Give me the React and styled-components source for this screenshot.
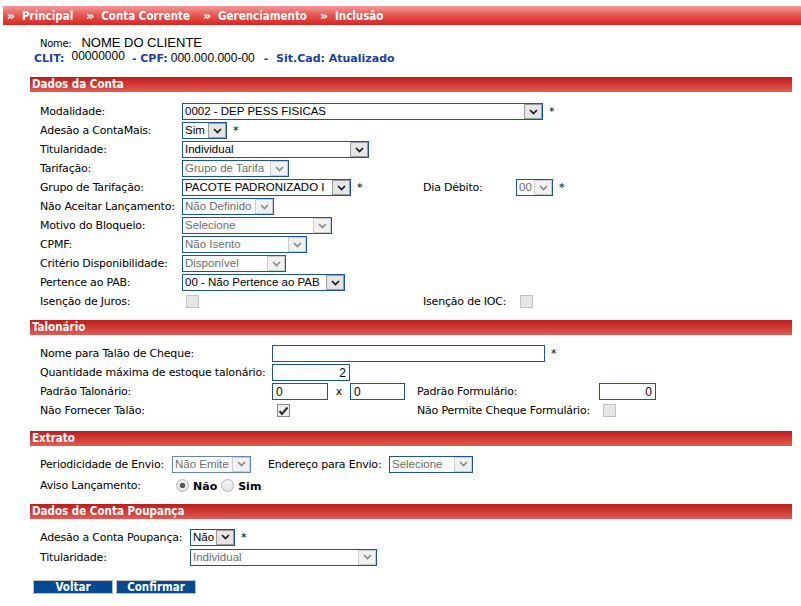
import React from 'react';
import styled, { createGlobalStyle } from 'styled-components';

const LABEL_FONT = `"DejaVu Sans", Verdana, sans-serif`;
const COND_FONT = `"DejaVu Sans Condensed", "DejaVu Sans", Verdana, sans-serif`;
const CTRL_FONT = `"Liberation Sans", Arial, sans-serif`;

const GlobalStyle = createGlobalStyle`
  html, body { margin: 0; padding: 0; background: #fff; }
  body { font-family: ${LABEL_FONT}; font-size: 11px; color: #000; }
`;

const Page = styled.div`
  width: 801px;
  padding-top: 6px;
`;

const NavBar = styled.nav`
  margin-left: 3px;
  height: 19px;
  display: flex;
  align-items: center;
  gap: 11px;
  padding-left: 2px;
  background: linear-gradient(to bottom, #f29d9a 0%, #e75a55 45%, #d9241e 100%);
`;

const NavItem = styled.span`
  display: flex;
  align-items: center;
  color: #fff;
  font-family: ${COND_FONT};
  font-stretch: condensed;
  font-weight: bold;
  font-size: 11.5px;
  white-space: nowrap;
`;

const NavArrow = styled.span`
  display: inline-block;
  width: 12px;
  margin-right: 5px;
  font-family: ${LABEL_FONT};
  font-stretch: normal;
  font-size: 13px;
  line-height: 13px;
  text-align: center;
`;

const ClientInfo = styled.div`
  padding: 10px 0 10px 0;
`;

const NameLine = styled.div`
  display: flex;
  align-items: baseline;
  height: 16px;
  padding-left: 40px;
`;

const NameLabel = styled.span`
  font-size: 10px;
  letter-spacing: -0.3px;
  margin-right: 10px;
`;

const NameValue = styled.span`
  font-family: ${CTRL_FONT};
  font-size: 13px;
`;

const InfoLine = styled.div`
  display: flex;
  align-items: baseline;
  height: 16px;
  padding-left: 34px;
`;

const InfoKey = styled.span`
  color: #20409a;
  font-weight: bold;
  font-size: 11px;
  margin-left: ${p => p.$ml || 0}px;
  white-space: pre;
`;

const InfoValue = styled.span`
  font-family: ${CTRL_FONT};
  font-size: 12px;
  margin-left: ${p => p.$ml || 0}px;
  position: relative;
  top: ${p => (p.$raised ? -2 : 0)}px;
`;

const Section = styled.section`
  margin-left: 30px;
  width: 762px;
`;

const SectionTitle = styled.h2`
  margin: 0;
  height: 15px;
  line-height: 15px;
  padding-left: 2px;
  color: #fff;
  font-family: ${COND_FONT};
  font-stretch: condensed;
  font-weight: bold;
  font-size: 11.5px;
  background: linear-gradient(to bottom, #b91f1d 0%, #d03a35 50%, #e35b53 100%);
`;

const SectionBody = styled.div`
  display: flex;
  flex-direction: column;
  padding: ${p => p.$pt}px 0 ${p => p.$pb}px 10px;
`;

const Row = styled.div`
  display: flex;
  align-items: center;
  height: ${p => p.$h || 19}px;
`;

const Cell = styled.div`
  display: flex;
  align-items: center;
  flex: none;
  width: ${p => p.$w}px;
`;

const Label = styled.span`
  flex: none;
  width: ${p => p.$w}px;
  margin-left: ${p => p.$ml || 0}px;
  letter-spacing: -0.2px;
  white-space: nowrap;
`;

const SelectBox = styled.div`
  flex: none;
  box-sizing: border-box;
  display: flex;
  align-items: stretch;
  width: ${p => p.$w}px;
  height: 17px;
  border: 1px solid ${p => p.$border || '#1c5597'};
  background: #fff;
`;

const SelectText = styled.span`
  flex: 1;
  min-width: 0;
  overflow: hidden;
  white-space: nowrap;
  padding-left: 2px;
  font-family: ${CTRL_FONT};
  font-size: 11.5px;
  line-height: 15px;
  color: ${p => (p.$disabled ? '#6d6d6d' : '#000')};
`;

const ArrowBtn = styled.span`
  flex: none;
  box-sizing: border-box;
  width: 18px;
  display: flex;
  align-items: center;
  justify-content: center;
  border: 1px solid ${p => (p.$disabled ? '#cdcdcd' : '#9c9c9c')};
  background: ${p => (p.$disabled ? '#f1f1f1' : '#e5e5e5')};
`;

const Req = styled.span`
  margin-left: 6px;
  font-size: 11px;
`;

const TextInput = styled.input`
  flex: none;
  box-sizing: border-box;
  width: ${p => p.$w}px;
  height: 17px;
  margin: 0;
  padding: 0 3px;
  border: 1px solid #1c5597;
  border-radius: 0;
  outline: none;
  background: #fff;
  font-family: ${CTRL_FONT};
  font-size: 12px;
  color: #000;
  text-align: ${p => p.$align || 'left'};
`;

const Times = styled.span`
  flex: none;
  width: 22px;
  text-align: center;
  font-size: 11px;
`;

const CheckBox = styled.span`
  flex: none;
  box-sizing: border-box;
  width: 13px;
  height: 13px;
  margin-left: ${p => p.$ml || 4}px;
  display: flex;
  align-items: center;
  justify-content: center;
  border: 1px solid ${p => (p.$checked ? '#8a8a8a' : '#c2c2c2')};
  background: ${p => (p.$checked ? '#ececec' : '#e6e6e6')};
`;

const RadioGroup = styled.div`
  display: flex;
  align-items: center;
  margin-left: 4px;
  gap: 4px;
`;

const RadioDot = styled.span`
  flex: none;
  box-sizing: border-box;
  width: 13px;
  height: 13px;
  border-radius: 50%;
  border: 1px solid #b4b4b4;
  background: ${p =>
    p.$checked
      ? 'radial-gradient(circle, #555 0 2.5px, #e9e9e9 3px)'
      : 'linear-gradient(#f4f4f4, #e2e2e2)'};
`;

const RadioText = styled.span`
  font-weight: bold;
  font-size: 11px;
  position: relative;
  top: 1px;
`;

const ButtonBar = styled.div`
  display: flex;
  gap: 3px;
  margin: 13px 0 0 33px;
`;

const Button = styled.button`
  box-sizing: border-box;
  width: 80px;
  height: 14px;
  padding: 0;
  margin: 0;
  border: 1px solid #bdbdbd;
  background: #034892;
  color: #fff;
  font-family: ${COND_FONT};
  font-stretch: condensed;
  font-weight: bold;
  font-size: 11.5px;
  line-height: 12px;
`;

const Chevron = ({ disabled }) => (
  <svg width="9" height="6" viewBox="0 0 9 6">
    <polyline
      points="1,1 4.5,4.5 8,1"
      fill="none"
      stroke={disabled ? '#8c8c8c' : '#1a1a1a'}
      strokeWidth="1.7"
    />
  </svg>
);

const Tick = () => (
  <svg width="11" height="10" viewBox="0 0 11 10">
    <polyline points="1.5,5 4,8 9.5,1.5" fill="none" stroke="#2a2a2a" strokeWidth="2" />
  </svg>
);

const Select = ({ w, value, disabled, border }) => (
  <SelectBox $w={w} $border={border}>
    <SelectText $disabled={disabled}>{value}</SelectText>
    <ArrowBtn $disabled={disabled}>
      <Chevron disabled={disabled} />
    </ArrowBtn>
  </SelectBox>
);

const Check = ({ checked, ml }) => (
  <CheckBox $checked={checked} $ml={ml}>
    {checked && <Tick />}
  </CheckBox>
);

const navItems = ['Principal', 'Conta Corrente', 'Gerenciamento', 'Inclusão'];

export default function App() {
  return (
    <Page>
      <GlobalStyle />
      <NavBar>
        {navItems.map(n => (
          <NavItem key={n}>
            <NavArrow>»</NavArrow>
            {n}
          </NavItem>
        ))}
      </NavBar>

      <ClientInfo>
        <NameLine>
          <NameLabel>Nome:</NameLabel>
          <NameValue>NOME DO CLIENTE</NameValue>
        </NameLine>
        <InfoLine>
          <InfoKey>CLIT:</InfoKey>
          <InfoValue $ml={7} $raised>00000000</InfoValue>
          <InfoKey $ml={7}>- CPF:</InfoKey>
          <InfoValue $ml={3}>000.000.000-00</InfoValue>
          <InfoKey $ml={9}>-  Sit.Cad: Atualizado</InfoKey>
        </InfoLine>
      </ClientInfo>

      <Section>
        <SectionTitle>Dados da Conta</SectionTitle>
        <SectionBody $pt={10} $pb={9}>
          <Row>
            <Label $w={142}>Modalidade:</Label>
            <Select w={361} value="0002 - DEP PESS FISICAS" />
            <Req>*</Req>
          </Row>
          <Row>
            <Label $w={142}>Adesão a ContaMais:</Label>
            <Select w={45} value="Sim" />
            <Req>*</Req>
          </Row>
          <Row>
            <Label $w={142}>Titularidade:</Label>
            <Select w={187} value="Individual" />
          </Row>
          <Row>
            <Label $w={142}>Tarifação:</Label>
            <Select w={107} value="Grupo de Tarifa" disabled />
          </Row>
          <Row>
            <Cell $w={383}>
              <Label $w={142}>Grupo de Tarifação:</Label>
              <Select w={169} value="PACOTE PADRONIZADO I" />
              <Req>*</Req>
            </Cell>
            <Label $w={93}>Dia Débito:</Label>
            <Select w={37} value="00" disabled />
            <Req>*</Req>
          </Row>
          <Row>
            <Label $w={142}>Não Aceitar Lançamento:</Label>
            <Select w={92} value="Não Definido" disabled />
          </Row>
          <Row>
            <Label $w={142}>Motivo do Bloqueio:</Label>
            <Select w={150} value="Selecione" disabled />
          </Row>
          <Row>
            <Label $w={142}>CPMF:</Label>
            <Select w={125} value="Não Isento" disabled />
          </Row>
          <Row>
            <Label $w={142}>Critério Disponibilidade:</Label>
            <Select w={104} value="Disponível" disabled />
          </Row>
          <Row>
            <Label $w={142}>Pertence ao PAB:</Label>
            <Select w={163} value="00 - Não Pertence ao PAB" />
          </Row>
          <Row>
            <Cell $w={383}>
              <Label $w={142}>Isenção de Juros:</Label>
              <Check />
            </Cell>
            <Label $w={93}>Isenção de IOC:</Label>
            <Check />
          </Row>
        </SectionBody>
      </Section>

      <Section>
        <SectionTitle>Talonário</SectionTitle>
        <SectionBody $pt={9} $pb={11}>
          <Row>
            <Label $w={232}>Nome para Talão de Cheque:</Label>
            <TextInput $w={273} defaultValue="" readOnly />
            <Req>*</Req>
          </Row>
          <Row>
            <Label $w={232}>Quantidade máxima de estoque talonário:</Label>
            <TextInput $w={78} $align="right" defaultValue="2" readOnly />
          </Row>
          <Row>
            <Cell $w={377}>
              <Label $w={232}>Padrão Talonário:</Label>
              <TextInput $w={56} defaultValue="0" readOnly />
              <Times>x</Times>
              <TextInput $w={55} defaultValue="0" readOnly />
            </Cell>
            <Label $w={182}>Padrão Formulário:</Label>
            <TextInput $w={57} $align="right" defaultValue="0" readOnly />
          </Row>
          <Row>
            <Cell $w={377}>
              <Label $w={232}>Não Fornecer Talão:</Label>
              <Check checked ml={5} />
            </Cell>
            <Label $w={182}>Não Permite Cheque Formulário:</Label>
            <Check />
          </Row>
        </SectionBody>
      </Section>

      <Section>
        <SectionTitle>Extrato</SectionTitle>
        <SectionBody $pt={8} $pb={8}>
          <Row $h={20}>
            <Label $w={132}>Periodicidade de Envio:</Label>
            <Select w={79} value="Não Emite" disabled border="#5f86b8" />
            <Label $w={121} $ml={17}>Endereço para Envio:</Label>
            <Select w={84} value="Selecione" disabled />
          </Row>
          <Row $h={22}>
            <Label $w={132}>Aviso Lançamento:</Label>
            <RadioGroup>
              <RadioDot $checked />
              <RadioText>Não</RadioText>
              <RadioDot />
              <RadioText>Sim</RadioText>
            </RadioGroup>
          </Row>
        </SectionBody>
      </Section>

      <Section>
        <SectionTitle>Dados de Conta Poupança</SectionTitle>
        <SectionBody $pt={8} $pb={0}>
          <Row $h={20}>
            <Label $w={150}>Adesão a Conta Poupança:</Label>
            <Select w={45} value="Não" />
            <Req>*</Req>
          </Row>
          <Row $h={20}>
            <Label $w={150}>Titularidade:</Label>
            <Select w={187} value="Individual" disabled />
          </Row>
        </SectionBody>
      </Section>

      <ButtonBar>
        <Button type="button">Voltar</Button>
        <Button type="button">Confirmar</Button>
      </ButtonBar>
    </Page>
  );
}
